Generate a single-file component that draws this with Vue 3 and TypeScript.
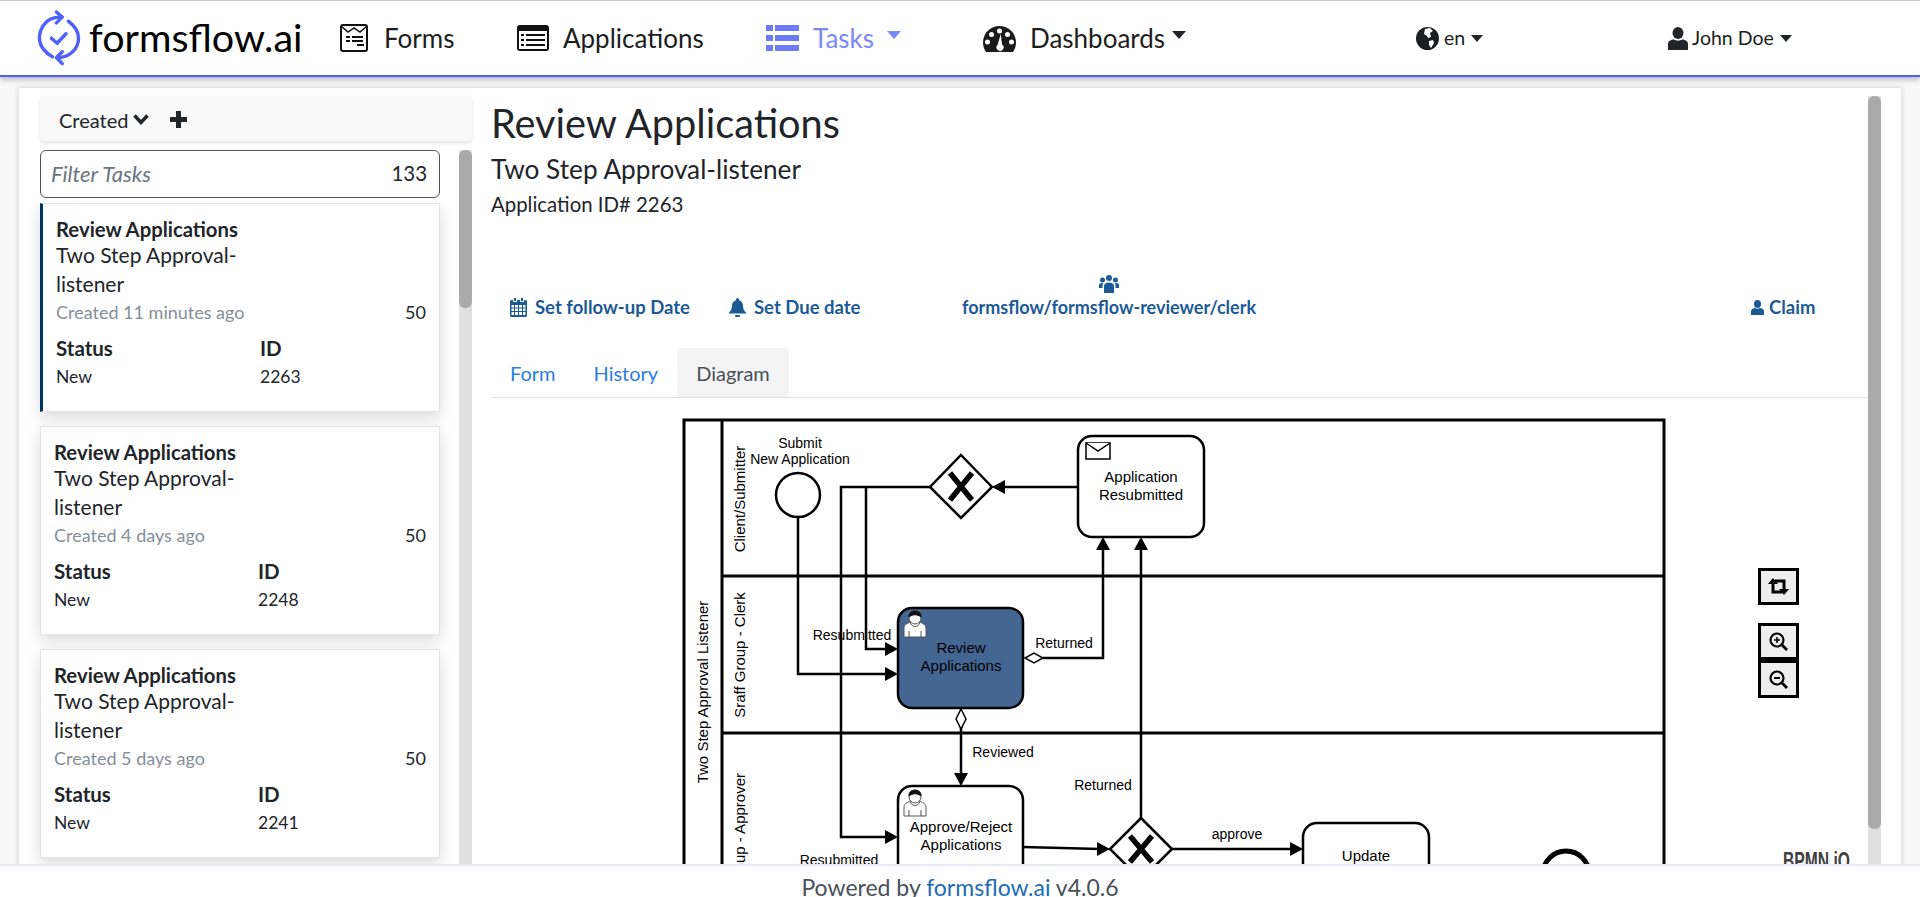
<template>
  <div class="page">
    <header class="navbar">
      <div class="brand">
        <svg class="logo" viewBox="20 12 135 165" fill="none" stroke="#4d61fc" stroke-width="10" stroke-linecap="round" stroke-linejoin="round">
          <path d="M90 33C50 33 30 65 30 95C30 120 50 140 68 150" />
          <path d="M80 18L97 33L80 50" />
          <path d="M115 45C135 60 145 75 145 95C145 125 120 152 85 152" />
          <path d="M97 135L80 152L97 170" />
          <path d="M65 95L82 110L108 82" />
        </svg>
        <span class="brand-name">formsflow.ai</span>
      </div>

      <a class="nav-item nav-forms">
        <svg class="nav-icon" width="28" height="28" viewBox="0 0 28 28" fill="none" stroke="#111" stroke-width="2">
          <rect x="1" y="1" width="26" height="26" rx="2" />
          <path d="M1 2L8 8L14 4L20 8L27 2" stroke-width="1.5" />
          <path d="M6 13H10M12 13H23M6 17H10M12 17H23M17 21H24" />
        </svg>
        Forms
      </a>
      <a class="nav-item">
        <svg class="nav-icon" width="32" height="26" viewBox="0 0 32 26">
          <rect width="32" height="26" rx="3" fill="#111" />
          <rect x="2" y="6" width="28" height="18" fill="#fff" />
          <path d="M4 9h3v2H4zM9 9h19v2H9zM4 14h3v2H4zM9 14h19v2H9zM4 19h3v2H4zM9 19h19v2H9z" fill="#111" />
        </svg>
        Applications
      </a>
      <a class="nav-item nav-active">
        <svg class="nav-icon" width="33" height="26" viewBox="0 0 33 26" fill="#6a7af8">
          <path d="M0 0h7v6H0zM9 0h24v6H9zM0 10h7v6H0zM9 10h24v6H9zM0 20h7v6H0zM9 20h24v6H9z" />
        </svg>
        Tasks
        <i class="caret caret-lg"></i>
      </a>
      <a class="nav-item">
        <svg class="nav-icon" width="33" height="27" viewBox="0 0 33 27">
          <path d="M3 27C1 24 0 21 0 17.5C0 8 7.500 1 16.500 1S33 8 33 17.500C33 21 32 24 30 27Z" fill="#1b1b1b" />
          <circle cx="16.500" cy="6" r="2.500" fill="#fff" />
          <circle cx="8.500" cy="9.500" r="2.500" fill="#fff" />
          <circle cx="24.500" cy="9.500" r="2.500" fill="#fff" />
          <circle cx="4.500" cy="17" r="2.500" fill="#fff" />
          <circle cx="28.500" cy="17" r="2.500" fill="#fff" />
          <path d="M17.800 9L19 19.500A3.500 3.500 0 1 1 14.500 20Z" fill="#fff" />
        </svg>
        Dashboards
        <i class="caret caret-lg"></i>
      </a>
      <a class="nav-item nav-small">
        <svg class="small-icon" width="23" height="23" viewBox="0 0 23 23">
          <circle cx="11.500" cy="11.500" r="11.500" fill="#1b1f23" />
          <path d="M9 2l5-1 3 3-3 2 1 4-3 1-1-2-3-2zM13 14l4-1 1 3-3 5-2-3z" fill="#fff" />
        </svg>
        en
        <i class="caret"></i>
      </a>
      <a class="nav-item nav-small">
        <svg class="small-icon user-icon" width="20" height="23" viewBox="0 0 20 23" fill="#212529">
          <ellipse cx="10" cy="6" rx="5.500" ry="6" />
          <path d="M0 23V17C0 14 3 12.500 6 12.500C8 14 12 14 14 12.500C17 12.500 20 14 20 17V23Z" />
        </svg>
        John Doe
        <i class="caret"></i>
      </a>
    </header>

    <div class="content">
      <section class="panel">
        <aside class="sidebar">
          <div class="sort-bar">
            <span class="sort-label">Created</span>
            <svg width="16" height="11" viewBox="0 0 16 11" fill="none" stroke="#212529" stroke-width="3.500">
              <path d="M1.500 1.500L8 8.500L14.500 1.500" />
            </svg>
            <svg class="plus" width="17" height="17" viewBox="0 0 17 17" fill="#212529">
              <path d="M6 0h5v6h6v5h-6v6H6v-6H0V6h6z" />
            </svg>
          </div>
          <div class="task-area">
            <div class="task-column">
              <div class="filter-box">
                <span class="filter-text">Filter Tasks</span>
                <span class="filter-count">133</span>
              </div>
              <article v-for="(task, index) in tasks" :key="task.id" class="task-card" :class="{ selected: index === 0 }">
                <div class="task-title">Review Applications</div>
                <div class="task-process">Two Step Approval-listener</div>
                <div class="task-meta">
                  <span class="task-created">Created {{ task.created }}</span>
                  <span class="task-priority">50</span>
                </div>
                <div class="task-grid">
                  <strong>Status</strong>
                  <strong>ID</strong>
                  <span>New</span>
                  <span>{{ task.id }}</span>
                </div>
              </article>
            </div>
            <div class="scroll-track small">
              <div class="scroll-thumb" style="height: 158px"></div>
            </div>
          </div>
        </aside>

        <main class="detail">
          <h1 class="detail-title">Review Applications</h1>
          <h2 class="detail-process">Two Step Approval-listener</h2>
          <div class="detail-app">Application ID# 2263</div>

          <div class="actions">
            <a class="action">
              <svg width="17" height="19" viewBox="0 0 17 19" fill="#1c5a96">
                <path d="M4 0h2v3H4zM11 0h2v3h-2z" />
                <path fill-rule="evenodd" d="M1.500 2H3v2h4V2h3v2h4V2h1.500A1.500 1.500 0 0 1 17 3.500v14a1.500 1.500 0 0 1-1.500 1.500h-14A1.500 1.500 0 0 1 0 17.500v-14A1.500 1.500 0 0 1 1.500 2zM1.500 7v2.500H4V7zM5 7v2.500h3V7zM9 7v2.500h3V7zM13 7v2.500h2.500V7zM1.500 10.500V13H4v-2.500zM5 10.500V13h3v-2.500zM9 10.500V13h3v-2.500zM13 10.500V13h2.500v-2.500zM1.500 14v3H4v-3zM5 14v3h3v-3zM9 14v3h3v-3zM13 14v3h2.500v-3z" />
              </svg>
              Set follow-up Date
            </a>
            <a class="action">
              <svg width="17" height="19" viewBox="0 0 17 19" fill="#1c5a96">
                <path d="M8.500 0a1.500 1.500 0 0 1 1.500 1.500v.7c2.500.6 4 2.800 4 5.300 0 4 1.500 5.500 3 7v1H0v-1c1.500-1.500 3-3 3-7 0-2.500 1.500-4.700 4-5.300v-.7A1.500 1.500 0 0 1 8.500 0zM6 17h5a2.500 2.500 0 0 1-5 0z" />
              </svg>
              Set Due date
            </a>
            <a class="action action-group">
              <svg width="20" height="18" viewBox="0 0 20 18" fill="#1c5a96">
                <circle cx="10" cy="3" r="3" />
                <circle cx="3.500" cy="5" r="2.500" />
                <circle cx="16.500" cy="5" r="2.500" />
                <path d="M5 18V11c0-2 2-3.500 5-3.500s5 1.500 5 3.500v7zM0 13v-3c0-1 1-2 3-2h1c-.5 1-.5 2-.5 5zM20 13v-3c0-1-1-2-3-2h-1c.5 1 .5 2 .5 5z" />
              </svg>
              formsflow/formsflow-reviewer/clerk
            </a>
            <a class="action action-claim">
              <svg width="13" height="15" viewBox="0 0 13 15" fill="#1c5a96">
                <ellipse cx="6.500" cy="4" rx="3.500" ry="4" />
                <path d="M0 15v-3.500C0 9.500 2 8 4 8c1.500 1 3.500 1 5 0 2 0 4 1.500 4 3.500V15z" />
              </svg>
              Claim
            </a>
          </div>

          <nav class="tabs">
            <a class="tab">Form</a>
            <a class="tab">History</a>
            <a class="tab tab-active">Diagram</a>
          </nav>

          <div class="diagram">
            <svg class="bpmn" width="1377" height="500" viewBox="491 398 1377 500">
              <g fill="none" stroke="#000" stroke-width="3">
                <rect x="684" y="420" width="980" height="600" />
                <path d="M722 420V1020M722 576H1664M722 733H1664" />
              </g>

              <g fill="none" stroke="#000" stroke-width="2.500">
                <path d="M798 517V674H888" />
                <path d="M930 487H841V837H888" />
                <path d="M866 487V649H888" />
                <path d="M1078 487H1004" />
                <path d="M1043 658H1103V548" />
                <path d="M1141 818V548" />
                <path d="M961 728V775" />
                <path d="M1023 847L1100 849" />
                <path d="M1172 849H1292" />
              </g>

              <g fill="#000">
                <polygon points="898,649 885,642 885,656" />
                <polygon points="898,674 885,667 885,681" />
                <polygon points="898,837 885,830 885,844" />
                <polygon points="992,487 1005,480 1005,494" />
                <polygon points="1103,537 1096,550 1110,550" />
                <polygon points="1141,537 1134,550 1148,550" />
                <polygon points="961,786 954,773 968,773" />
                <polygon points="1110,849 1097,842 1097,856" />
                <polygon points="1303,849 1290,842 1290,856" />
              </g>

              <circle cx="798" cy="495" r="22" fill="#fff" stroke="#000" stroke-width="2.500" />
              <circle cx="1566" cy="874" r="23" fill="#fff" stroke="#000" stroke-width="5" />

              <g fill="#fff" stroke="#000" stroke-width="2.500">
                <polygon points="961,455 992,487 961,518 930,487" />
                <polygon points="1141,818 1172,849 1141,880 1110,849" />
                <rect x="1078" y="436" width="126" height="101" rx="14" />
                <rect x="898" y="608" width="125" height="100" rx="14" fill="#446692" />
                <rect x="898" y="786" width="125" height="100" rx="14" />
                <rect x="1303" y="823" width="126" height="100" rx="14" />
              </g>

              <g fill="none" stroke="#000" stroke-width="5.500">
                <path d="M950 473L972 500M972 473L950 500" />
                <path d="M1130 836L1152 862M1152 836L1130 862" />
              </g>

              <g fill="#fff" stroke="#000" stroke-width="1.500">
                <polygon points="1025,658 1034,653 1043,658 1034,663" />
                <polygon points="961,709 966,719 961,729 956,719" />
                <rect x="1086" y="443" width="24" height="16" />
                <path d="M1086 443L1098 451L1110 443" />
              </g>

              <g fill="#fff" stroke="#555" stroke-width="1">
                <path d="M904 637V628C904 624 909 623 910 622H920C921 623 926 624 926 628V637Z" />
                <path d="M910 622C911 628 919 628 920 622" fill="none" />
                <path d="M909 637V631M921 637V631" fill="none" />
                <circle cx="915" cy="618" r="6" />
                <path d="M909 617C908 609 922 609 921 617C917 614 913 614 909 617Z" fill="#111" stroke="#111" />
              </g>
              <g fill="#fff" stroke="#555" stroke-width="1">
                <path d="M904 816V807C904 803 909 802 910 801H920C921 802 926 803 926 807V816Z" />
                <path d="M910 801C911 807 919 807 920 801" fill="none" />
                <path d="M909 816V810M921 816V810" fill="none" />
                <circle cx="915" cy="797" r="6" />
                <path d="M909 796C908 788 922 788 921 796C917 793 913 793 909 796Z" fill="#111" stroke="#111" />
              </g>

              <g class="labels">
                <text x="800" y="448" text-anchor="middle">Submit</text>
                <text x="800" y="464" text-anchor="middle">New Application</text>
                <text class="big" x="1141" y="482" text-anchor="middle">Application</text>
                <text class="big" x="1141" y="500" text-anchor="middle">Resubmitted</text>
                <text x="852" y="640" text-anchor="middle">Resubmitted</text>
                <text x="1064" y="648" text-anchor="middle">Returned</text>
                <text class="big" x="961" y="653" text-anchor="middle">Review</text>
                <text class="big" x="961" y="671" text-anchor="middle">Applications</text>
                <text x="1003" y="757" text-anchor="middle">Reviewed</text>
                <text x="1103" y="790" text-anchor="middle">Returned</text>
                <text class="big" x="961" y="832" text-anchor="middle">Approve/Reject</text>
                <text class="big" x="961" y="850" text-anchor="middle">Applications</text>
                <text x="839" y="865" text-anchor="middle">Resubmitted</text>
                <text x="1237" y="839" text-anchor="middle">approve</text>
                <text class="big" x="1366" y="861" text-anchor="middle">Update</text>
                <text class="big" transform="translate(745 499) rotate(-90)" text-anchor="middle">Client/Submitter</text>
                <text class="big" transform="translate(745 655) rotate(-90)" text-anchor="middle">Sraff Group - Clerk</text>
                <text class="big" transform="translate(745 773) rotate(-90)" text-anchor="end">Sraff Group - Approver</text>
                <text class="big" transform="translate(708 692) rotate(-90)" text-anchor="middle">Two Step Approval Listener</text>
              </g>
            </svg>

            <div class="zoom-controls">
              <button class="zoom-btn reset">
                <svg width="21" height="17" viewBox="0 0 21 17" fill="#000">
                  <path d="M5 5V14H14M16 12V3H7" fill="none" stroke="#000" stroke-width="3" />
                  <polygon points="5,0 10,6 0,6" />
                  <polygon points="16,17 11,11 21,11" />
                </svg>
              </button>
              <div class="zoom-pair">
                <button class="zoom-btn">
                  <svg width="19" height="19" viewBox="0 0 19 19" fill="none" stroke="#000" stroke-width="2.200">
                    <circle cx="8" cy="8" r="6.500" />
                    <path d="M12.500 12.500L18 18" stroke-width="2.800" />
                    <path d="M5 8H11M8 5V11" stroke-width="1.500" />
                  </svg>
                </button>
                <button class="zoom-btn">
                  <svg width="19" height="19" viewBox="0 0 19 19" fill="none" stroke="#000" stroke-width="2.200">
                    <circle cx="8" cy="8" r="6.500" />
                    <path d="M12.500 12.500L18 18" stroke-width="2.800" />
                    <path d="M5 8H11" stroke-width="2" />
                  </svg>
                </button>
              </div>
            </div>
            <span class="bpmn-logo">BPMN.iO</span>
          </div>
        </main>

        <div class="scroll-track large">
          <div class="scroll-thumb" style="height: 733px"></div>
        </div>
      </section>
    </div>

    <footer class="footer">Powered by <a class="footer-link">formsflow.ai</a> v4.0.6</footer>
  </div>
</template>

<script setup lang="ts">
interface Task {
  id: number
  created: string
}

const tasks: Task[] = [
  { id: 2263, created: '11 minutes ago' },
  { id: 2248, created: '4 days ago' },
  { id: 2241, created: '5 days ago' },
]
</script>

<style>
html,
body {
  margin: 0;
  height: 100%;
  overflow: hidden;
}
</style>

<style scoped>
.page {
  position: relative;
  display: flex;
  flex-direction: column;
  height: 897px;
  overflow: hidden;
  background: #f8f8f8;
  color: #212529;
  font-family: Lato, 'Open Sans', sans-serif;
}

.navbar {
  position: relative;
  z-index: 2;
  flex: none;
  box-sizing: border-box;
  display: grid;
  grid-template-columns: 340px 177px 249px 217px 433px 252px 1fr;
  align-items: center;
  height: 77px;
  border-top: 1px solid #ccc;
  border-bottom: 2px solid #4d61fc;
  background: #fff;
  box-shadow: 0 2px 6px rgba(0, 0, 0, 0.3);
}

.brand {
  display: flex;
  align-items: center;
  padding-left: 36px;
}

.logo {
  width: 46px;
  height: 56px;
}

.brand-name {
  margin-left: 7px;
  padding-bottom: 2px;
  color: #000;
  font-size: 39.500px;
  line-height: 1;
}

.nav-item {
  display: flex;
  align-items: center;
  color: #1d1d1d;
  font-size: 26px;
  line-height: 32px;
  white-space: nowrap;
}

.nav-icon {
  flex: none;
  margin-right: 14px;
}

.nav-forms .nav-icon {
  margin-right: 16px;
}

.nav-active {
  color: #7a89f8;
}

.nav-small {
  font-size: 19.500px;
}

.small-icon {
  flex: none;
  margin-right: 5px;
}

.user-icon {
  margin-right: 4px;
}

.caret {
  margin-left: 6px;
  border-top: 7px solid #212529;
  border-left: 6px solid transparent;
  border-right: 6px solid transparent;
}

.caret-lg {
  margin-top: -6px;
  margin-left: 7px;
  border-top-width: 8px;
  border-left-width: 7px;
  border-right-width: 7px;
}

.nav-active .caret {
  margin-left: 13px;
  border-top-color: #7a89f8;
}

.content {
  flex: 1;
  min-height: 0;
  padding: 11px 19px 0;
}

.panel {
  display: flex;
  height: 900px;
  background: #fff;
  box-shadow: 0 0 5px rgba(0, 0, 0, 0.2);
}

.sidebar {
  flex: none;
  width: 432px;
  margin: 8px 19px 0 21px;
}

.sort-bar {
  box-sizing: border-box;
  display: flex;
  align-items: center;
  height: 45px;
  padding: 2px 0 0 19px;
  border-radius: 4px;
  background: #f9f9f9;
  box-shadow: 0 2px 4px rgba(0, 0, 0, 0.12);
}

.sort-label {
  margin-right: 5px;
  font-size: 20px;
}

.plus {
  margin-left: 21px;
}

.task-area {
  display: flex;
  justify-content: space-between;
  margin-top: 9px;
}

.task-column {
  width: 400px;
}

.filter-box {
  box-sizing: border-box;
  display: flex;
  align-items: center;
  justify-content: space-between;
  height: 48px;
  margin-bottom: 5px;
  padding: 0 12px 2px 10px;
  border: 1px solid #555;
  border-radius: 6px;
}

.filter-text {
  color: #6c757d;
  font-size: 22px;
  font-style: italic;
}

.filter-count {
  font-size: 20.400px;
}

.task-card {
  box-sizing: border-box;
  height: 209px;
  margin-bottom: 14px;
  padding: 13px 13px 0;
  border: 1px solid #e4e4e8;
  background: #fff;
  box-shadow: 0 6px 14px rgba(0, 0, 0, 0.14);
}

.task-card.selected {
  border-left: 3px solid #003366;
}

.task-title {
  font-size: 20.300px;
  font-weight: 700;
  line-height: 24px;
}

.task-process {
  max-width: 200px;
  margin-top: -1px;
  font-size: 21px;
  line-height: 29px;
}

.task-meta {
  display: flex;
  align-items: center;
  justify-content: space-between;
  height: 28px;
}

.task-created {
  color: #868e96;
  font-size: 18px;
}

.task-priority {
  font-size: 18px;
}

.task-grid {
  display: grid;
  grid-template-columns: 204px 1fr;
  grid-template-rows: 28px 29px;
  align-items: center;
  margin-top: 8px;
  font-size: 17.500px;
}

.task-grid strong {
  font-size: 20.500px;
}

.scroll-track {
  flex: none;
  width: 13px;
  background: #e0e0e0;
}

.scroll-track.small {
  height: 720px;
}

.scroll-track.large {
  height: 800px;
  margin: 8px 20px 0 0;
}

.scroll-thumb {
  border-radius: 6px;
  background: #aaa;
}

.detail {
  flex: 1;
  min-width: 0;
  overflow: hidden;
}

.detail-title {
  margin: 13px 0 0;
  font-size: 39.700px;
  font-weight: 400;
  line-height: 43px;
}

.detail-process {
  margin: 9px 0 0;
  font-size: 26.200px;
  font-weight: 400;
  line-height: 32px;
}

.detail-app {
  margin-top: 6px;
  font-size: 20.400px;
  line-height: 26px;
}

.actions {
  display: grid;
  grid-template-columns: 219px 233px 789px auto;
  align-items: end;
  height: 46px;
  margin-top: 58px;
  padding-left: 19px;
}

.action {
  display: flex;
  align-items: center;
  gap: 8px;
  color: #1c5a96;
  font-size: 18.500px;
  font-weight: 700;
  line-height: 28px;
  white-space: nowrap;
}

.action-group {
  flex-direction: column;
  gap: 0;
  align-items: center;
  justify-self: start;
  font-size: 18px;
}

.action-claim {
  gap: 5px;
}

.tabs {
  display: flex;
  height: 49px;
  margin-top: 27px;
  border-bottom: 1px solid #dee2e6;
  box-sizing: content-box;
}

.tab {
  display: flex;
  align-items: center;
  padding: 0 19px;
  color: #2a7de1;
  font-size: 20px;
}

.tab-active {
  color: #495057;
  background: #f4f4f4;
  border-radius: 4px 4px 0 0;
}

.diagram {
  position: relative;
  height: 480px;
}

.bpmn {
  display: block;
}

.labels text {
  font-family: 'Liberation Sans', Arial, sans-serif;
  font-size: 14px;
  fill: #000;
}

.labels text.big {
  font-size: 15px;
}

.zoom-controls {
  position: absolute;
  left: 1267px;
  top: 170px;
  display: flex;
  flex-direction: column;
  gap: 18px;
}

.zoom-pair {
  display: flex;
  flex-direction: column;
}

.zoom-btn {
  box-sizing: border-box;
  display: flex;
  align-items: center;
  justify-content: center;
  width: 41px;
  height: 37px;
  padding: 0;
  border: 3px solid #000;
  background: #eee;
}

.zoom-pair .zoom-btn + .zoom-btn {
  height: 38px;
  margin-top: 0;
}

.bpmn-logo {
  position: absolute;
  left: 1292px;
  top: 451px;
  color: #404040;
  font-family: 'Liberation Sans', sans-serif;
  font-size: 23px;
  font-weight: 700;
  line-height: 24px;
  transform: scaleX(0.68);
  transform-origin: left;
}

.footer {
  position: absolute;
  left: 0;
  right: 0;
  top: 864px;
  z-index: 3;
  box-sizing: border-box;
  height: 33px;
  overflow: hidden;
  padding-top: 7px;
  border-top: 2px solid #e8e8f0;
  background: #fff;
  color: #495057;
  font-size: 23px;
  line-height: 28px;
  text-align: center;
}

.footer-link {
  color: #1c6bb5;
}
</style>
